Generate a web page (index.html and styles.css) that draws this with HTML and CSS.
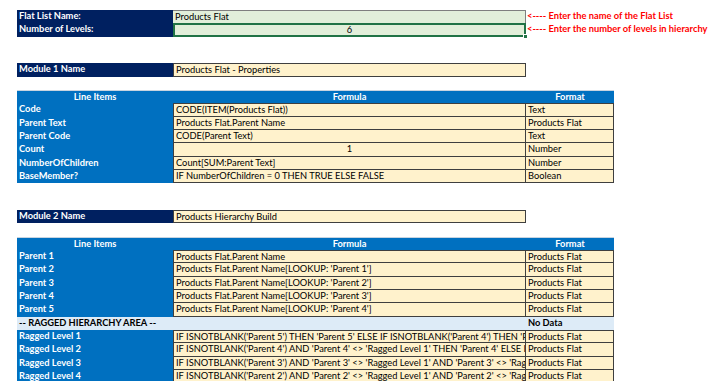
FILE: index.html
```html
<!DOCTYPE html>
<html>
<head>
<meta charset="utf-8">
<link rel="stylesheet" href="styles.css">
</head>
<body>
<div class="sheet">
  <div class="c navy">Flat List Name:</div>
  <div class="c input top-in">Products Flat</div>
  <div class="c note">&lt;---- Enter the name of the Flat List</div>

  <div class="c navy">Number of Levels:</div>
  <div class="c input sel num">6<span class="handle"></span></div>
  <div class="c note">&lt;---- Enter the number of levels in hierarchy</div>

  <div class="gap"></div>
  <div class="gap"></div>

  <div class="c navy">Module 1 Name</div>
  <div class="c box">Products Flat - Properties</div>
  <div class="fill"></div>
  <div class="gap"></div>

  <div class="c blue head line-top">Line Items</div>
  <div class="c blue head line-top">Formula</div>
  <div class="c blue head line-top">Format</div>
  <div class="rest"></div>

  <div class="c blue b">Code</div>
  <div class="c beige f t">CODE(ITEM(Products Flat))</div>
  <div class="c beige g t">Text</div>
  <div class="rest"></div>
  <div class="c blue b">Parent Text</div>
  <div class="c beige f">Products Flat.Parent Name</div>
  <div class="c beige g">Products Flat</div>
  <div class="rest"></div>
  <div class="c blue b">Parent Code</div>
  <div class="c beige f">CODE(Parent Text)</div>
  <div class="c beige g">Text</div>
  <div class="rest"></div>
  <div class="c blue b">Count</div>
  <div class="c beige f num">1</div>
  <div class="c beige g">Number</div>
  <div class="rest"></div>
  <div class="c blue b">NumberOfChildren</div>
  <div class="c beige f">Count[SUM:Parent Text]</div>
  <div class="c beige g">Number</div>
  <div class="rest"></div>
  <div class="c blue b">BaseMember?</div>
  <div class="c beige f">IF NumberOfChildren = 0 THEN TRUE ELSE FALSE</div>
  <div class="c beige g">Boolean</div>
  <div class="rest"></div>

  <div class="gap"></div>
  <div class="gap"></div>

  <div class="c navy">Module 2 Name</div>
  <div class="c box">Products Hierarchy Build</div>
  <div class="fill"></div>
  <div class="gap"></div>

  <div class="c blue head line-top">Line Items</div>
  <div class="c blue head line-top">Formula</div>
  <div class="c blue head line-top">Format</div>
  <div class="rest"></div>

  <div class="c blue b">Parent 1</div>
  <div class="c beige f t">Products Flat.Parent Name</div>
  <div class="c beige g t">Products Flat</div>
  <div class="rest"></div>
  <div class="c blue b">Parent 2</div>
  <div class="c beige f">Products Flat.Parent Name[LOOKUP: 'Parent 1']</div>
  <div class="c beige g">Products Flat</div>
  <div class="rest"></div>
  <div class="c blue b">Parent 3</div>
  <div class="c beige f">Products Flat.Parent Name[LOOKUP: 'Parent 2']</div>
  <div class="c beige g">Products Flat</div>
  <div class="rest"></div>
  <div class="c blue b">Parent 4</div>
  <div class="c beige f">Products Flat.Parent Name[LOOKUP: 'Parent 3']</div>
  <div class="c beige g">Products Flat</div>
  <div class="rest"></div>
  <div class="c blue b">Parent 5</div>
  <div class="c beige f">Products Flat.Parent Name[LOOKUP: 'Parent 4']</div>
  <div class="c beige g">Products Flat</div>
  <div class="rest"></div>

  <div class="c pale b">-- RAGGED HIERARCHY AREA --</div>
  <div class="c pale"></div>
  <div class="c pale b">No Data</div>
  <div class="rest"></div>

  <div class="c blue b">Ragged Level 1</div>
  <div class="c beige f t">IF ISNOTBLANK('Parent 5') THEN 'Parent 5' ELSE IF ISNOTBLANK('Parent 4') THEN 'Parent 4' ELSE IF ISNOTBLANK('Parent 3')</div>
  <div class="c beige g t">Products Flat</div>
  <div class="rest"></div>
  <div class="c blue b">Ragged Level 2</div>
  <div class="c beige f">IF ISNOTBLANK('Parent 4') AND 'Parent 4' &lt;&gt; 'Ragged Level 1' THEN 'Parent 4' ELSE IF ISNOTBLANK('Parent 3')</div>
  <div class="c beige g">Products Flat</div>
  <div class="rest"></div>
  <div class="c blue b">Ragged Level 3</div>
  <div class="c beige f">IF ISNOTBLANK('Parent 3') AND 'Parent 3' &lt;&gt; 'Ragged Level 1' AND 'Parent 3' &lt;&gt; 'Ragged Level 2'</div>
  <div class="c beige g">Products Flat</div>
  <div class="rest"></div>
  <div class="c blue b">Ragged Level 4</div>
  <div class="c beige f">IF ISNOTBLANK('Parent 2') AND 'Parent 2' &lt;&gt; 'Ragged Level 1' AND 'Parent 2' &lt;&gt; 'Ragged Level 3'</div>
  <div class="c beige g">Products Flat</div>
  <div class="rest"></div>
</div>
</body>
</html>
```
FILE: styles.css
```css
html, body {
  margin: 0;
  padding: 0;
  background: #ffffff;
  overflow: hidden;
}
.sheet {
  display: grid;
  grid-template-columns: 156px 353px 88px 1fr;
  grid-auto-rows: 13.333px;
  padding: 10px 0 0 17px;
  font-family: Lato, "Liberation Sans", sans-serif;
  font-size: 9.3px;
  color: #000;
}
.c {
  box-sizing: border-box;
  line-height: 12.6px;
  padding: 0 2px;
  white-space: nowrap;
  overflow: hidden;
  position: relative;
}
.gap { grid-column: 1 / -1; }
.fill { grid-column: 3 / -1; }
.rest { grid-column: 4; }
.navy {
  background: #002060;
  color: #fff;
  font-weight: 700;
}
.input {
  background: #e2efda;
  grid-column: 2;
}
.top-in {
  border-top: 1px solid #7f7f7f;
  border-right: 1px solid #7f7f7f;
}
.sel {
  border: 2px solid #217346;
  line-height: 10px;
  overflow: visible;
}
.handle {
  position: absolute;
  right: -4px;
  bottom: -4px;
  width: 5px;
  height: 5px;
  background: #217346;
  border: 1px solid #fff;
  box-sizing: border-box;
}
.note {
  grid-column: 3 / 5;
  color: #ff0000;
  font-weight: 700;
  padding-left: 1px;
}
.box {
  grid-column: 2;
  background: #fff2cc;
  border: 1px solid #3f3f3f;
}
.blue {
  background: #0070c0;
  color: #fff;
  font-weight: 700;
}
.head { text-align: center; }
.line-top { border-top: 1px solid #c8d4e0; }
.beige {
  background: #fff2cc;
  border-right: 1px solid #3f3f3f;
  border-bottom: 1px solid #3f3f3f;
}
.f { border-left: 1px solid #3f3f3f; }
.t { border-top: 1px solid #3f3f3f; line-height: 11.6px; }
.num { text-align: center; }
.b { font-weight: 700; }
.pale { background: #ddebf7; color: #000; }
```
